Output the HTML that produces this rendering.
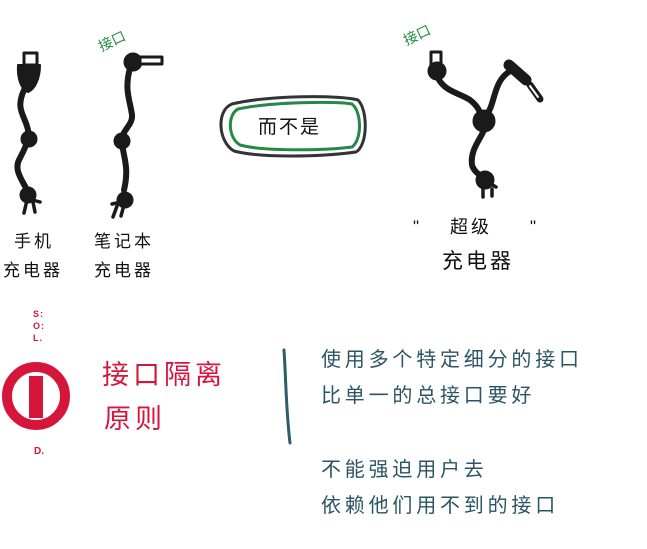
<!DOCTYPE html>
<html><head><meta charset="utf-8"><style>
html,body{margin:0;padding:0;background:#fff;}
body{width:647px;height:549px;position:relative;overflow:hidden;font-family:"Liberation Sans","Noto Sans CJK SC",sans-serif;}
.t{position:absolute;white-space:nowrap;line-height:1;}
.blk{color:#111;font-size:17px;letter-spacing:3px;}
.tl{color:#2b5564;font-size:20px;letter-spacing:3.8px;}
.red{color:#d5163a;font-size:27px;letter-spacing:4px;}
</style></head><body>
<svg width="647" height="549" style="position:absolute;left:0;top:0" fill="none" stroke-linecap="round" stroke-linejoin="round">
 <g stroke="#1a1a1a">
  <rect x="24" y="53" width="13" height="12" stroke-width="3"/>
  <path d="M18 65 L40 65 C40 80,34 90,28 92 C22 90,17 80,18 65 Z" fill="#1a1a1a" stroke-width="2"/>
  <path d="M24 90 C15 110,25 115,28 130 C30 140,24 150,19 160 C14 170,22 180,27 190" stroke-width="6"/>
  <circle cx="29" cy="139" r="8" fill="#1a1a1a" stroke-width="1"/>
  <circle cx="28" cy="195" r="8" fill="#1a1a1a" stroke-width="1"/>
  <path d="M22 197 L40 202 M27 200 L24 213 M33 202 L35 212" stroke-width="3.5"/>
 </g>
 <g stroke="#1a1a1a">
  <circle cx="133" cy="62" r="9" fill="#1a1a1a" stroke-width="1"/>
  <rect x="140" y="57" width="22" height="7" stroke-width="3" fill="#fff"/>
  <path d="M130 68 C124 90,130 100,132 115 C133 125,122 130,122 140 C122 155,130 165,124 190" stroke-width="6"/>
  <circle cx="122" cy="141" r="8" fill="#1a1a1a" stroke-width="1"/>
  <circle cx="125" cy="200" r="8" fill="#1a1a1a" stroke-width="1"/>
  <path d="M112 204 L130 200 M117 206 L113 217 M124 205 L121 216" stroke-width="3.5"/>
 </g>
 <path d="M232 104 C270 95,340 95,358 100 C368 110,368 145,356 152 C320 157,260 158,234 151 C218 142,216 110,232 104Z" stroke="#333" stroke-width="3"/>
 <path d="M238 109 C270 102,335 101,352 104 C362 112,362 140,352 147 C320 151,262 151,240 145 C228 138,227 115,238 109Z" stroke="#238a45" stroke-width="3"/>
 <g stroke="#1a1a1a">
  <rect x="431" y="52" width="10" height="13" stroke-width="3"/>
  <circle cx="437" cy="71" r="9" fill="#1a1a1a" stroke-width="1"/>
  <path d="M438 78 C445 92,460 93,470 100 C478 106,480 112,482 118" stroke-width="6"/>
  <path d="M509 65 L526 80" stroke-width="11"/>
  <path d="M530 85 L540 99" stroke-width="7"/>
  <path d="M530 86 L538 97" stroke="#fff" stroke-width="2"/>
  <path d="M512 70 C492 80,496 105,486 115" stroke-width="6"/>
  <circle cx="484" cy="121" r="11" fill="#1a1a1a" stroke-width="1"/>
  <path d="M484 130 C480 140,470 150,472 165 C474 172,480 175,484 178" stroke-width="6"/>
  <circle cx="485" cy="180" r="9" fill="#1a1a1a" stroke-width="1"/>
  <path d="M486 181 L496 187 M483 188 L483 197 M492 189 L492 196" stroke-width="3.5"/>
 </g>
 <circle cx="36" cy="396" r="29" stroke="#d5163a" stroke-width="10"/>
 <rect x="29" y="376" width="14" height="42" fill="#d5163a"/>
 <path d="M284 350 C286 380,286 410,290 443" stroke="#2b5e66" stroke-width="3"/>
</svg>
<div class="t" style="left:98px;top:34px;color:#238a45;font-size:14px;transform:rotate(-25deg)">接口</div>
<div class="t" style="left:403px;top:28px;color:#238a45;font-size:14px;transform:rotate(-25deg)">接口</div>
<div class="t" style="left:258px;top:118px;font-size:19px;color:#111;letter-spacing:2px">而不是</div>
<div class="t blk" style="left:14px;top:233px">手机</div>
<div class="t blk" style="left:3px;top:262px">充电器</div>
<div class="t blk" style="left:94px;top:233px">笔记本</div>
<div class="t blk" style="left:94px;top:262px">充电器</div>
<div class="t" style="left:413px;top:218px;font-size:17px;color:#111">"</div>
<div class="t" style="left:450px;top:218px;font-size:18px;color:#111;letter-spacing:3px">超级</div>
<div class="t" style="left:530px;top:218px;font-size:17px;color:#111">"</div>
<div class="t" style="left:442px;top:251px;font-size:21px;color:#111;letter-spacing:3px">充电器</div>
<div class="t" style="left:33px;top:308px;color:#d5163a;font-size:9px;font-weight:bold;line-height:12px;letter-spacing:1px">S:<br>O:<br>L.</div>
<div class="t" style="left:34px;top:447px;color:#d5163a;font-size:10px;font-weight:bold">D.</div>
<div class="t red" style="left:102px;top:362px">接口隔离</div>
<div class="t red" style="left:104px;top:406px">原则</div>
<div class="t tl" style="left:321px;top:350px">使用多个特定细分的接口</div>
<div class="t tl" style="left:321px;top:386px">比单一的总接口要好</div>
<div class="t tl" style="left:321px;top:460px">不能强迫用户去</div>
<div class="t tl" style="left:321px;top:496px">依赖他们用不到的接口</div>
</body></html>
